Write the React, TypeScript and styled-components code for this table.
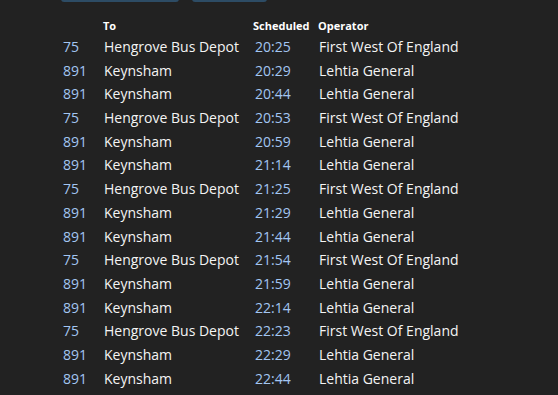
import styled, { createGlobalStyle } from "styled-components";

const GlobalStyle = createGlobalStyle`
  html, body {
    margin: 0;
    padding: 0;
    background: #222222;
  }
  body {
    font-family: "Open Sans", "Noto Sans", sans-serif;
    color: #f2f2f2;
  }
`;

const Page = styled.div`
  width: 558px;
  height: 395px;
  overflow: hidden;
  background: #222222;
`;

const Toolbar = styled.div`
  display: flex;
  align-items: flex-end;
  gap: 13px;
  height: 2px;
  padding-left: 61px;
  overflow: hidden;
`;

const ToolButton = styled.button<{ $width: number }>`
  flex: none;
  width: ${(p) => p.$width}px;
  height: 28px;
  border: 0;
  border-radius: 0 0 3px 3px;
  background: #2d4c65;
`;

const Table = styled.div`
  display: grid;
  grid-template-columns: 41px 150px 65px 1fr;
  padding: 15px 0 0 62px;
`;

const HeadCell = styled.div`
  height: 18px;
  line-height: 18px;
  font-size: 11px;
  font-weight: 700;
  color: #ffffff;
  white-space: nowrap;
`;

const Cell = styled.div<{ $accent?: boolean }>`
  height: 23.7px;
  line-height: 23.7px;
  font-size: 14px;
  padding-left: 1px;
  white-space: nowrap;
  color: ${(p) => (p.$accent ? "#a3c6f2" : "#f4f4f4")};
`;

const TimeCell = styled(Cell)`
  padding-left: 2px;
`;

type Departure = { route: string; to: string; time: string; operator: string };

const hengrove = (time: string): Departure => ({
  route: "75",
  to: "Hengrove Bus Depot",
  time,
  operator: "First West Of England",
});
const keynsham = (time: string): Departure => ({
  route: "891",
  to: "Keynsham",
  time,
  operator: "Lehtia General",
});

const departures: Departure[] = [
  hengrove("20:25"),
  keynsham("20:29"),
  keynsham("20:44"),
  hengrove("20:53"),
  keynsham("20:59"),
  keynsham("21:14"),
  hengrove("21:25"),
  keynsham("21:29"),
  keynsham("21:44"),
  hengrove("21:54"),
  keynsham("21:59"),
  keynsham("22:14"),
  hengrove("22:23"),
  keynsham("22:29"),
  keynsham("22:44"),
];

export default function App() {
  return (
    <>
      <GlobalStyle />
      <Page>
        <Toolbar>
          <ToolButton $width={118} />
          <ToolButton $width={75} />
        </Toolbar>
        <Table>
          <HeadCell />
          <HeadCell>To</HeadCell>
          <HeadCell>Scheduled</HeadCell>
          <HeadCell>Operator</HeadCell>
          {departures.map((d, i) => (
            <>
              <Cell key={`r${i}`} $accent>
                {d.route}
              </Cell>
              <Cell key={`t${i}`}>{d.to}</Cell>
              <TimeCell key={`s${i}`} $accent>
                {d.time}
              </TimeCell>
              <Cell key={`o${i}`}>{d.operator}</Cell>
            </>
          ))}
        </Table>
      </Page>
    </>
  );
}
